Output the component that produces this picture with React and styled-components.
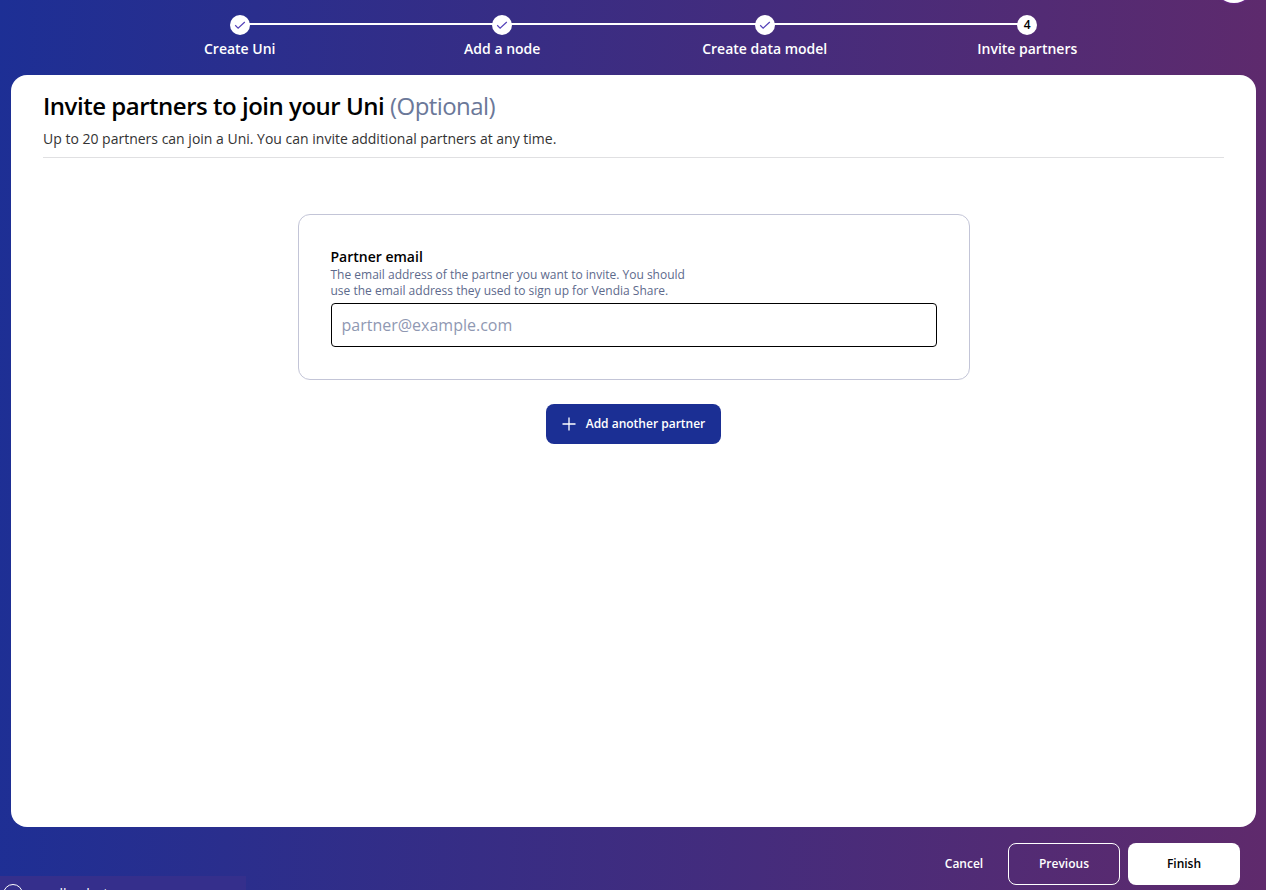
import React from "react";
import styled, { createGlobalStyle } from "styled-components";

const Global = createGlobalStyle`
  * { box-sizing: border-box; }
  body { margin: 0; font-family: "Open Sans", "Noto Sans", sans-serif; }
  button, input { font-family: inherit; }
`;

const Page = styled.div`
  position: relative;
  display: flex;
  flex-direction: column;
  height: 890px;
  overflow: hidden;
  background: linear-gradient(92deg, #1d2f95 0%, #5f2a6c 100%);
`;

const Stepper = styled.ol`
  display: flex;
  list-style: none;
  width: 1050px;
  height: 75px;
  flex: none;
  margin: 0 0 0 108.5px;
  padding: 15px 0 0;
`;

const StepItem = styled.li`
  position: relative;
  flex: 1;
  display: flex;
  flex-direction: column;
  align-items: center;
  &:not(:last-child)::after {
    content: "";
    position: absolute;
    top: 8px;
    left: 50%;
    width: 100%;
    height: 2px;
    background: #fff;
  }
`;

const StepDot = styled.span`
  position: relative;
  z-index: 1;
  display: flex;
  align-items: center;
  justify-content: center;
  width: 20px;
  height: 20px;
  border-radius: 50%;
  background: #fff;
  color: #000;
  font-size: 12px;
  font-weight: 600;
  line-height: 20px;
`;

const StepLabel = styled.span`
  margin-top: 4px;
  color: #fff;
  font-size: 14px;
  font-weight: 600;
  line-height: 20px;
`;

const Panel = styled.main`
  display: flex;
  flex-direction: column;
  align-items: center;
  height: 752px;
  flex: none;
  margin: 0 10px 0 11px;
  padding: 14px 32px 0;
  border-radius: 16px;
  background: #fff;
`;

const PanelHeader = styled.header`
  width: 100%;
  height: 69px;
  border-bottom: 1px solid #e0e0e2;
`;

const Title = styled.h1`
  margin: 0;
  font-size: 24px;
  font-weight: 600;
  line-height: 34px;
  letter-spacing: -0.48px;
  color: #000;
`;

const Optional = styled.span`
  font-weight: 400;
  letter-spacing: -0.58px;
  color: #6b7899;
`;

const Subtitle = styled.p`
  margin: 6px 0 0;
  font-size: 14px;
  line-height: 20px;
  color: #333;
`;

const PartnerCard = styled.section`
  display: flex;
  flex-direction: column;
  width: 672px;
  height: 166px;
  margin-top: 56px;
  padding: 32px;
  border: 1px solid #c3c5d7;
  border-radius: 12px;
`;

const FieldLabel = styled.label`
  font-size: 14px;
  font-weight: 600;
  line-height: 20px;
  color: #000;
`;

const FieldHint = styled.p`
  width: 370px;
  margin: 0 0 4px;
  font-size: 12px;
  line-height: 16px;
  color: #5d6a8c;
`;

const EmailInput = styled.input`
  height: 44px;
  padding: 0 10px;
  border: 1px solid #000;
  border-radius: 4px;
  outline: none;
  font-size: 16px;
  &::placeholder { color: #8f98b2; opacity: 1; }
`;

const Button = styled.button`
  display: flex;
  align-items: center;
  justify-content: center;
  height: 42px;
  width: ${(p) => p.$width || 112}px;
  padding: 0;
  border: 1px solid ${(p) => p.$border || "transparent"};
  border-radius: 8px;
  background: ${(p) => p.$fill || "transparent"};
  color: ${(p) => p.$color || "#fff"};
  font-size: 12px;
  font-weight: 600;
  line-height: 16px;
`;

const AddButton = styled(Button)`
  height: 40px;
  margin-top: 24px;
  gap: 10px;
`;

const Footer = styled.footer`
  display: flex;
  justify-content: flex-end;
  gap: 8px;
  padding: 16px 26px 0 0;
`;

const Avatar = styled.span`
  position: absolute;
  top: -37px;
  left: 1214px;
  width: 40px;
  height: 40px;
  border-radius: 50%;
  background: #fff;
  box-shadow: 0 0 3px #7c2ca8;
`;

const StatusBar = styled.aside`
  position: absolute;
  left: 0;
  top: 876px;
  display: flex;
  gap: 9px;
  width: 246px;
  height: 40px;
  padding: 8px 3px;
  background: #352f8c;
  color: #fff;
  font-size: 14px;
  line-height: 20px;
`;

const StatusIcon = styled.span`
  width: 20px;
  height: 20px;
  border: 1px solid #fff;
  border-radius: 50%;
`;

const StatusText = styled.span`
  word-spacing: 2px;
`;

const CheckIcon = () => (
  <svg width="12" height="12" viewBox="0 0 12 12" fill="none" stroke="#5340b8" strokeWidth="1.2">
    <path d="M1.2 6.3 4.1 9.1 10.8 3" />
  </svg>
);

const PlusIcon = () => (
  <svg width="14" height="14" viewBox="0 0 14 14" fill="none" stroke="#fff" strokeWidth="1.3">
    <path d="M7 .5v13M.5 7h13" />
  </svg>
);

const steps = [
  { label: "Create Uni", done: true },
  { label: "Add a node", done: true },
  { label: "Create data model", done: true },
  { label: "Invite partners", done: false },
];

export default function App() {
  return (
    <Page>
      <Global />
      <Stepper>
        {steps.map((step, i) => (
          <StepItem key={step.label}>
            <StepDot>{step.done ? <CheckIcon /> : i + 1}</StepDot>
            <StepLabel>{step.label}</StepLabel>
          </StepItem>
        ))}
      </Stepper>
      <Panel>
        <PanelHeader>
          <Title>
            Invite partners to join your Uni <Optional>(Optional)</Optional>
          </Title>
          <Subtitle>Up to 20 partners can join a Uni. You can invite additional partners at any time.</Subtitle>
        </PanelHeader>
        <PartnerCard>
          <FieldLabel htmlFor="partner-email">Partner email</FieldLabel>
          <FieldHint>
            The email address of the partner you want to invite. You should use the email address they used to sign up for Vendia Share.
          </FieldHint>
          <EmailInput id="partner-email" type="email" placeholder="partner@example.com" />
        </PartnerCard>
        <AddButton $width={175} $fill="#1b2f94">
          <PlusIcon />
          Add another partner
        </AddButton>
      </Panel>
      <Footer>
        <Button $width={72}>Cancel</Button>
        <Button $border="#fff">Previous</Button>
        <Button $fill="#fff" $color="#000">Finish</Button>
      </Footer>
      <Avatar />
      <StatusBar>
        <StatusIcon />
        <StatusText>small robots</StatusText>
      </StatusBar>
    </Page>
  );
}
